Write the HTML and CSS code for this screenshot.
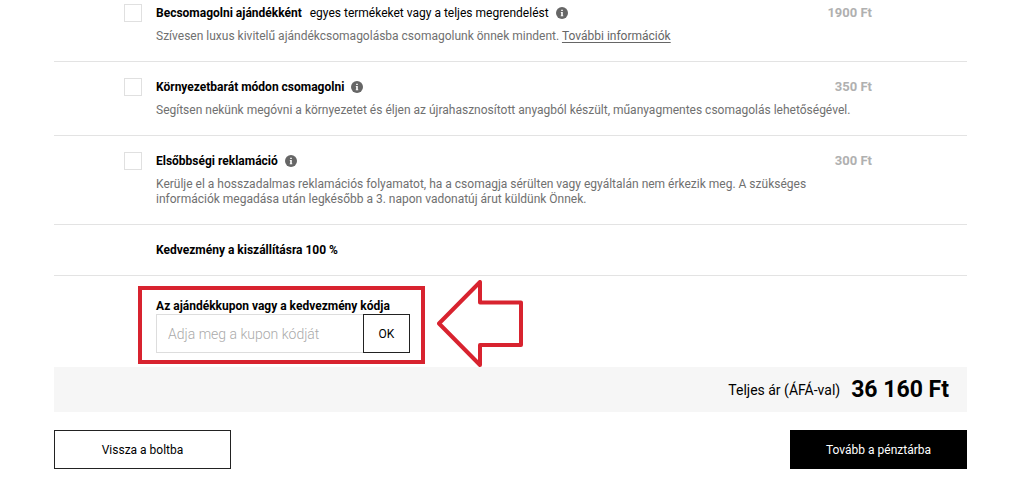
FILE: index.html
```html
<!DOCTYPE html>
<html lang="hu">
<head>
  <meta charset="UTF-8" />
  <meta name="viewport" content="width=device-width, initial-scale=1.0" />
  <title>Kosár</title>
  <link rel="stylesheet" href="styles.css">
</head>
<body>
  <main class="cart">
    <div class="option first">
      <input type="checkbox" id="giftWrap" />
      <div class="option-body">
        <div class="option-head">
          <label for="giftWrap"><strong>Becsomagolni ajándékként</strong> <span class="note">egyes termékeket vagy a teljes megrendelést</span></label>
          <svg class="info" viewBox="0 0 12 12"><circle cx="6" cy="6" r="6" /><path d="M5.2 2.7h1.6v1.4H5.2zM4.8 5h2v3.4h.5v.8H4.7v-.8h.5V5.8h-.4z" /></svg>
          <span class="price">1900 Ft</span>
        </div>
        <p>Szívesen luxus kivitelű ajándékcsomagolásba csomagolunk önnek mindent. <a href="#">További információk</a></p>
      </div>
    </div>

    <div class="option">
      <input type="checkbox" id="ecoWrap" />
      <div class="option-body">
        <div class="option-head">
          <label for="ecoWrap"><strong>Környezetbarát módon csomagolni</strong></label>
          <svg class="info" viewBox="0 0 12 12"><circle cx="6" cy="6" r="6" /><path d="M5.2 2.7h1.6v1.4H5.2zM4.8 5h2v3.4h.5v.8H4.7v-.8h.5V5.8h-.4z" /></svg>
          <span class="price">350 Ft</span>
        </div>
        <p>Segítsen nekünk megóvni a környezetet és éljen az újrahasznosított anyagból készült, műanyagmentes csomagolás lehetőségével.</p>
      </div>
    </div>

    <div class="option">
      <input type="checkbox" id="priorityClaim" />
      <div class="option-body">
        <div class="option-head">
          <label for="priorityClaim"><strong>Elsőbbségi reklamáció</strong></label>
          <svg class="info" viewBox="0 0 12 12"><circle cx="6" cy="6" r="6" /><path d="M5.2 2.7h1.6v1.4H5.2zM4.8 5h2v3.4h.5v.8H4.7v-.8h.5V5.8h-.4z" /></svg>
          <span class="price">300 Ft</span>
        </div>
        <p>Kerülje el a hosszadalmas reklamációs folyamatot, ha a csomagja sérülten vagy egyáltalán nem érkezik meg. A szükséges információk megadása után legkésőbb a 3. napon vadonatúj árut küldünk Önnek.</p>
      </div>
    </div>

    <div class="discount">Kedvezmény a kiszállításra 100 %</div>

    <div class="coupon">
      <form class="coupon-box">
        <label for="couponCode">Az ajándékkupon vagy a kedvezmény kódja</label>
        <div class="coupon-field">
          <input type="text" id="couponCode" placeholder="Adja meg a kupon kódját" />
          <button type="submit">OK</button>
        </div>
      </form>
      <svg class="arrow" viewBox="0 0 86 87"><path d="M2 43.5L43 2V22.5H84V65H43V85Z" /></svg>
    </div>

    <div class="total">
      <span>Teljes ár (ÁFÁ-val)</span>
      <strong>36 160 Ft</strong>
    </div>

    <div class="actions">
      <button class="btn">Vissza a boltba</button>
      <button class="btn btn-dark">Tovább a pénztárba</button>
    </div>
  </main>
</body>
</html>
```

FILE: styles.css
```css
* {
  box-sizing: border-box;
}

body {
  margin: 0;
  font-family: Roboto, "Liberation Sans", sans-serif;
  font-size: 12px;
  color: #000;
  background: #fff;
}

button,
input {
  font-family: inherit;
}

.cart {
  padding: 0 57px 0 54px;
}

.option {
  display: flex;
  gap: 14px;
  padding: 16px 95px 17px 70px;
  border-bottom: 1px solid #e3e3e3;
}

.option.first {
  padding-top: 4px;
}

.option input {
  appearance: none;
  flex: none;
  width: 18px;
  height: 18px;
  margin: 0;
  border: 1px solid #e0e0e0;
  background: #fff;
}

.option-body {
  flex: 1;
}

.option-head {
  display: flex;
  align-items: center;
  line-height: 18px;
}

.note {
  margin-left: 5px;
}

.info {
  width: 12px;
  height: 12px;
  margin-left: 7px;
}

.info circle {
  fill: #666;
}

.info path {
  fill: #fff;
}

.price {
  margin-left: auto;
  font-size: 13px;
  font-weight: bold;
  color: #b0b0b0;
}

.option p {
  margin: 7px 0 0;
  padding-right: 8px;
  line-height: 15px;
  color: #707070;
}

.option a {
  color: #666;
  text-underline-offset: 2px;
}

.discount {
  padding: 16px 0 16px 102px;
  line-height: 18px;
  font-weight: bold;
  border-bottom: 1px solid #e3e3e3;
}

.coupon {
  display: flex;
  align-items: flex-start;
  gap: 12px;
  padding: 4px 0 0 84px;
}

.coupon-box {
  width: 287px;
  margin: 6px 0 3px;
  padding: 8px 11px 7px 14px;
  border: 4px solid #d8232f;
}

.coupon-box label {
  display: block;
  line-height: 16px;
  font-weight: bold;
}

.coupon-field {
  display: flex;
}

.coupon-field input {
  flex: 1;
  min-width: 0;
  height: 39px;
  padding: 0 11px;
  font-size: 14px;
  font-weight: 300;
  border: 1px solid #ddd;
  border-right: none;
  border-radius: 0;
}

.coupon-field input::placeholder {
  color: #aaa;
}

.coupon-field button {
  width: 47px;
  padding: 0;
  font-size: 12px;
  color: #000;
  background: #fff;
  border: 1px solid #222;
}

.arrow {
  width: 86px;
  height: 87px;
}

.arrow path {
  fill: none;
  stroke: #d8232f;
  stroke-width: 4;
  stroke-linejoin: round;
}

.total {
  display: flex;
  align-items: center;
  justify-content: flex-end;
  gap: 11px;
  height: 45px;
  padding-right: 18px;
  font-size: 14px;
  background: #f6f6f6;
}

.total strong {
  font-size: 23px;
}

.actions {
  display: flex;
  justify-content: space-between;
  padding-top: 18px;
}

.btn {
  width: 177px;
  height: 39px;
  font-size: 12px;
  color: #000;
  background: #fff;
  border: 1px solid #222;
}

.btn-dark {
  color: #fff;
  background: #000;
  border-color: #000;
}
```
